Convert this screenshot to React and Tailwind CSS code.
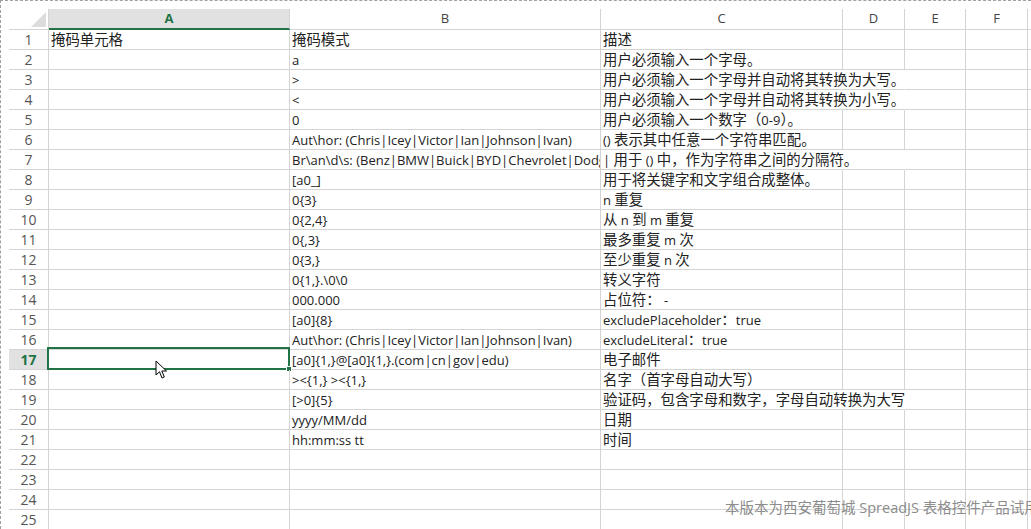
import React from "react"

const cols = ["A", "B", "C", "D", "E", "F"]

const data = [
  ["掩码单元格", "掩码模式", "描述"],
  ["", "a", "用户必须输入一个字母。"],
  ["", ">", "用户必须输入一个字母并自动将其转换为大写。"],
  ["", "<", "用户必须输入一个字母并自动将其转换为小写。"],
  ["", "0", "用户必须输入一个数字（0-9）。"],
  ["", "Aut\\hor: (Chris|Icey|Victor|Ian|Johnson|Ivan)", "() 表示其中任意一个字符串匹配。"],
  ["", "Br\\an\\d\\s: (Benz|BMW|Buick|BYD|Chevrolet|Dodge)", "| 用于 () 中，作为字符串之间的分隔符。"],
  ["", "[a0_]", "用于将关键字和文字组合成整体。"],
  ["", "0{3}", "n 重复"],
  ["", "0{2,4}", "从 n 到 m 重复"],
  ["", "0{,3}", "最多重复 m 次"],
  ["", "0{3,}", "至少重复 n 次"],
  ["", "0{1,}.\\0\\0", "转义字符"],
  ["", "000.000", "占位符：  -"],
  ["", "[a0]{8}", "excludePlaceholder：true"],
  ["", "Aut\\hor: (Chris|Icey|Victor|Ian|Johnson|Ivan)", "excludeLiteral：true"],
  ["", "[a0]{1,}@[a0]{1,}.(com|cn|gov|edu)", "电子邮件"],
  ["", "><{1,} ><{1,}", "名字（首字母自动大写）"],
  ["", "[>0]{5}", "验证码，包含字母和数字，字母自动转换为大写"],
  ["", "yyyy/MM/dd", "日期"],
  ["", "hh:mm:ss tt", "时间"],
  ["", "", ""],
  ["", "", ""],
  ["", "", ""],
  ["", "", ""],
]

// rows whose text in C spills over D and E, so their gridlines are hidden
const spill = [3, 4, 7, 19]

const font = { fontFamily: '"Open Sans", "Noto Sans CJK SC", sans-serif' }

// latin runs are set a bit smaller so they take the width of the original UI font
const Txt = ({ children }) =>
  children
    .split(/([\x00-\x7F]+)/)
    .filter(Boolean)
    .map((part, i) =>
      /^[\x00-\x7F]+$/.test(part) ? (
        <span key={i} className="text-[13px]">{part}</span>
      ) : (
        <span key={i}>{part}</span>
      )
    )

const Cursor = () => (
  <svg className="absolute left-[106px] top-[11px]" width="13" height="20" viewBox="0 0 13 20">
    <path d="M1 1 L1 15 L4.5 11.8 L7 18 L9.3 17 L6.8 11 L11.5 11 Z" fill="#fff" stroke="#000" strokeWidth="1" strokeLinejoin="round" />
  </svg>
)

export default function App() {
  return (
    <div className="relative w-[1031px] h-[529px] overflow-hidden bg-white" style={font}>
      <div className="border-t border-l border-dashed border-[#a0a0a0] pt-2 pl-2 h-full">
        <div className="grid grid-cols-[40px_241px_311px_242px_62px_61px_62px_1fr] text-[14.4px] text-[#222]">
          {/* corner */}
          <div className="relative h-[21px] border-r border-b border-[#d4d4d4]">
            <div className="absolute right-[2px] bottom-[2px] w-0 h-0 border-l-[15px] border-l-transparent border-b-[15px] border-b-[#dcdcdc]" />
          </div>
          {cols.map((c, i) => (
            <div
              key={c}
              className={
                i === 0
                  ? "h-[21px] flex items-center justify-center bg-[#e1e1e1] border-r border-[#d4d4d4] border-b-2 border-b-[#217346] text-[13px] font-bold text-[#217346]"
                  : "h-[21px] flex items-center justify-center border-r border-b border-[#d4d4d4] text-[13px] text-[#444]"
              }
            >
              {c}
            </div>
          ))}
          <div className="h-[21px] border-b border-[#d4d4d4]" />

          {data.map((row, r) => {
            const n = r + 1
            const sel = n === 17
            const over = spill.includes(n)
            return (
              <React.Fragment key={n}>
                <div
                  className={
                    sel
                      ? "h-[20px] flex items-center justify-center bg-[#e1e1e1] border-r border-b border-[#d4d4d4] text-[14px] font-bold text-[#217346]"
                      : "h-[20px] flex items-center justify-center border-r border-b border-[#d4d4d4] text-[14px] text-[#555]"
                  }
                >
                  {n}
                </div>
                <div className="relative h-[20px] border-r border-b border-[#d4d4d4] pl-[2px] leading-[20px] whitespace-nowrap">
                  <Txt>{row[0]}</Txt>
                  {sel && (
                    <div className="absolute -left-[2px] -top-[3px] w-[243px] h-[23px] border-2 border-[#217346]">
                      <div className="absolute -right-[4px] -bottom-[4px] w-[6px] h-[6px] bg-[#217346] border border-white" />
                      <Cursor />
                    </div>
                  )}
                </div>
                <div className="h-[20px] border-r border-b border-[#d4d4d4] pl-[2px] leading-[20px] whitespace-nowrap overflow-hidden">
                  <Txt>{row[1]}</Txt>
                </div>
                <div
                  className={
                    over
                      ? "h-[20px] border-r border-r-transparent border-b border-b-[#d4d4d4] pl-[2px] leading-[20px] whitespace-nowrap"
                      : "h-[20px] border-r border-b border-[#d4d4d4] pl-[2px] leading-[20px] whitespace-nowrap"
                  }
                >
                  <Txt>{row[2]}</Txt>
                </div>
                <div
                  className={
                    over
                      ? "h-[20px] border-r border-r-transparent border-b border-b-[#d4d4d4]"
                      : "h-[20px] border-r border-b border-[#d4d4d4]"
                  }
                />
                <div className="h-[20px] border-r border-b border-[#d4d4d4]" />
                <div className="h-[20px] border-r border-b border-[#d4d4d4]" />
                <div className="h-[20px] border-b border-[#d4d4d4]" />
              </React.Fragment>
            )
          })}
        </div>
      </div>

      {/* trial watermark */}
      <div className="absolute left-[725px] top-[498px] text-[14.5px] leading-[20px] text-[#8c8c8c] whitespace-nowrap">
        本版本为西安葡萄城 SpreadJS 表格控件产品试用
      </div>
    </div>
  )
}
